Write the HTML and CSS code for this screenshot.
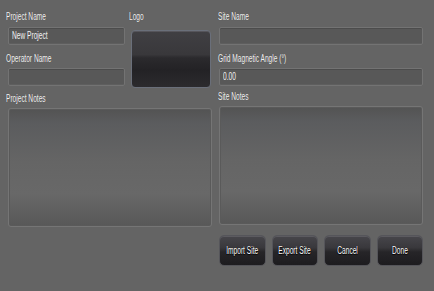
FILE: index.html
```html
<!DOCTYPE html>
<html lang="en">
<head>
    <meta charset="UTF-8">
    <title>Project Settings</title>
    <link rel="stylesheet" href="styles.css">
</head>
<body>
    <div class="form">
        <!-- Left column -->
        <div class="col">
            <div class="top-left">
                <div class="fields">
                    <label class="lbl first"><span class="t">Project Name</span></label>
                    <div class="input"><span class="t">New Project</span></div>
                    <label class="lbl second"><span class="t">Operator Name</span></label>
                    <div class="input"></div>
                </div>
                <div class="logo-wrap">
                    <label class="lbl first"><span class="t">Logo</span></label>
                    <div class="logo"></div>
                </div>
            </div>
            <label class="lbl third"><span class="t">Project Notes</span></label>
            <div class="notes"></div>
        </div>

        <!-- Right column -->
        <div class="col">
            <label class="lbl first"><span class="t">Site Name</span></label>
            <div class="input"></div>
            <label class="lbl second"><span class="t">Grid Magnetic Angle (°)</span></label>
            <div class="input"><span class="t">0.00</span></div>
            <label class="lbl third"><span class="t">Site Notes</span></label>
            <div class="notes"></div>
            <div class="buttons">
                <button class="btn"><span class="t">Import Site</span></button>
                <button class="btn"><span class="t">Export Site</span></button>
                <button class="btn"><span class="t">Cancel</span></button>
                <button class="btn"><span class="t">Done</span></button>
            </div>
        </div>
    </div>
</body>
</html>
```

FILE: styles.css
```css
/* Reset */
* { margin: 0; padding: 0; box-sizing: border-box; }

body {
    background: #646464;
    font-family: "Liberation Sans", Arial, sans-serif;
    font-size: 10px;
    color: #f2f2f2;
    width: 434px;
    height: 291px;
    overflow: hidden;
}

/* Narrow text, the UI font is a condensed face */
.t {
    display: inline-block;
    white-space: nowrap;
    transform: scaleX(0.66);
    transform-origin: left center;
}

.form {
    display: grid;
    grid-template-columns: 205px 205px;
    column-gap: 6px;
    padding: 11px 0 0 7px;
}

.col {
    display: flex;
    flex-direction: column;
}

/* Labels */
.lbl {
    display: block;
    line-height: 12px;
    height: 12px;
    white-space: nowrap;
    text-shadow: 0 0 1px rgba(0, 0, 0, 0.35);
}

.lbl.first { margin-bottom: 4px; }
.lbl.second { margin-top: 8px; margin-bottom: 3px; }
.lbl.third { margin-top: 5px; margin-bottom: 3px; }

.col:first-child .lbl { margin-left: -1px; }

/* Inputs */
.input {
    height: 18px;
    margin-left: 1px;
    border: 1px solid #737373;
    border-radius: 2px;
    background: #585858;
    box-shadow: inset 0 1px 0 #4c4c4c, inset 0 -1px 0 #5e5e5e;
    padding-left: 3px;
    line-height: 16px;
    color: #f2f2f2;
}

/* Top left: fields + logo */
.top-left {
    display: flex;
    gap: 6px;
}

.fields {
    width: 118px;
    display: flex;
    flex-direction: column;
}

.logo-wrap {
    display: flex;
    flex-direction: column;
}

.logo-wrap .lbl.first { margin-bottom: 7px; margin-left: -2px; }

.logo {
    width: 80px;
    height: 58px;
    border: 1px solid #6a6f7a;
    border-radius: 4px;
    background: linear-gradient(#403f43 0%, #39383b 42%, #2b2a2d 48%, #232225 70%, #2c2b2e 100%);
    box-shadow: inset 0 1px 0 #56555b;
}

/* Notes */
.notes {
    height: 119px;
    margin-left: 1px;
    border: 1px solid #757575;
    border-radius: 3px;
    background: linear-gradient(#535353 0%, #5b5c5e 12%, #656565 45%, #686868 72%, #585858 100%);
    box-shadow: inset 0 0 0 1px #5a5a5a;
}

/* Buttons */
.buttons {
    display: flex;
    gap: 6px;
    margin-top: 10px;
    margin-left: 1px;
}

.btn {
    width: 47px;
    height: 31px;
    border: 1px solid #55555a;
    border-radius: 5px;
    background: linear-gradient(#47464b 0%, #39383c 40%, #262528 55%, #1d1c1f 100%);
    box-shadow: inset 0 1px 0 #5c5b60;
    color: #ffffff;
    font-family: inherit;
    font-size: 10px;
    text-shadow: 0 1px 1px #000, 0 0 1px #000;
}

.btn .t {
    transform-origin: center center;
    margin: 0 -10px;
}
```
